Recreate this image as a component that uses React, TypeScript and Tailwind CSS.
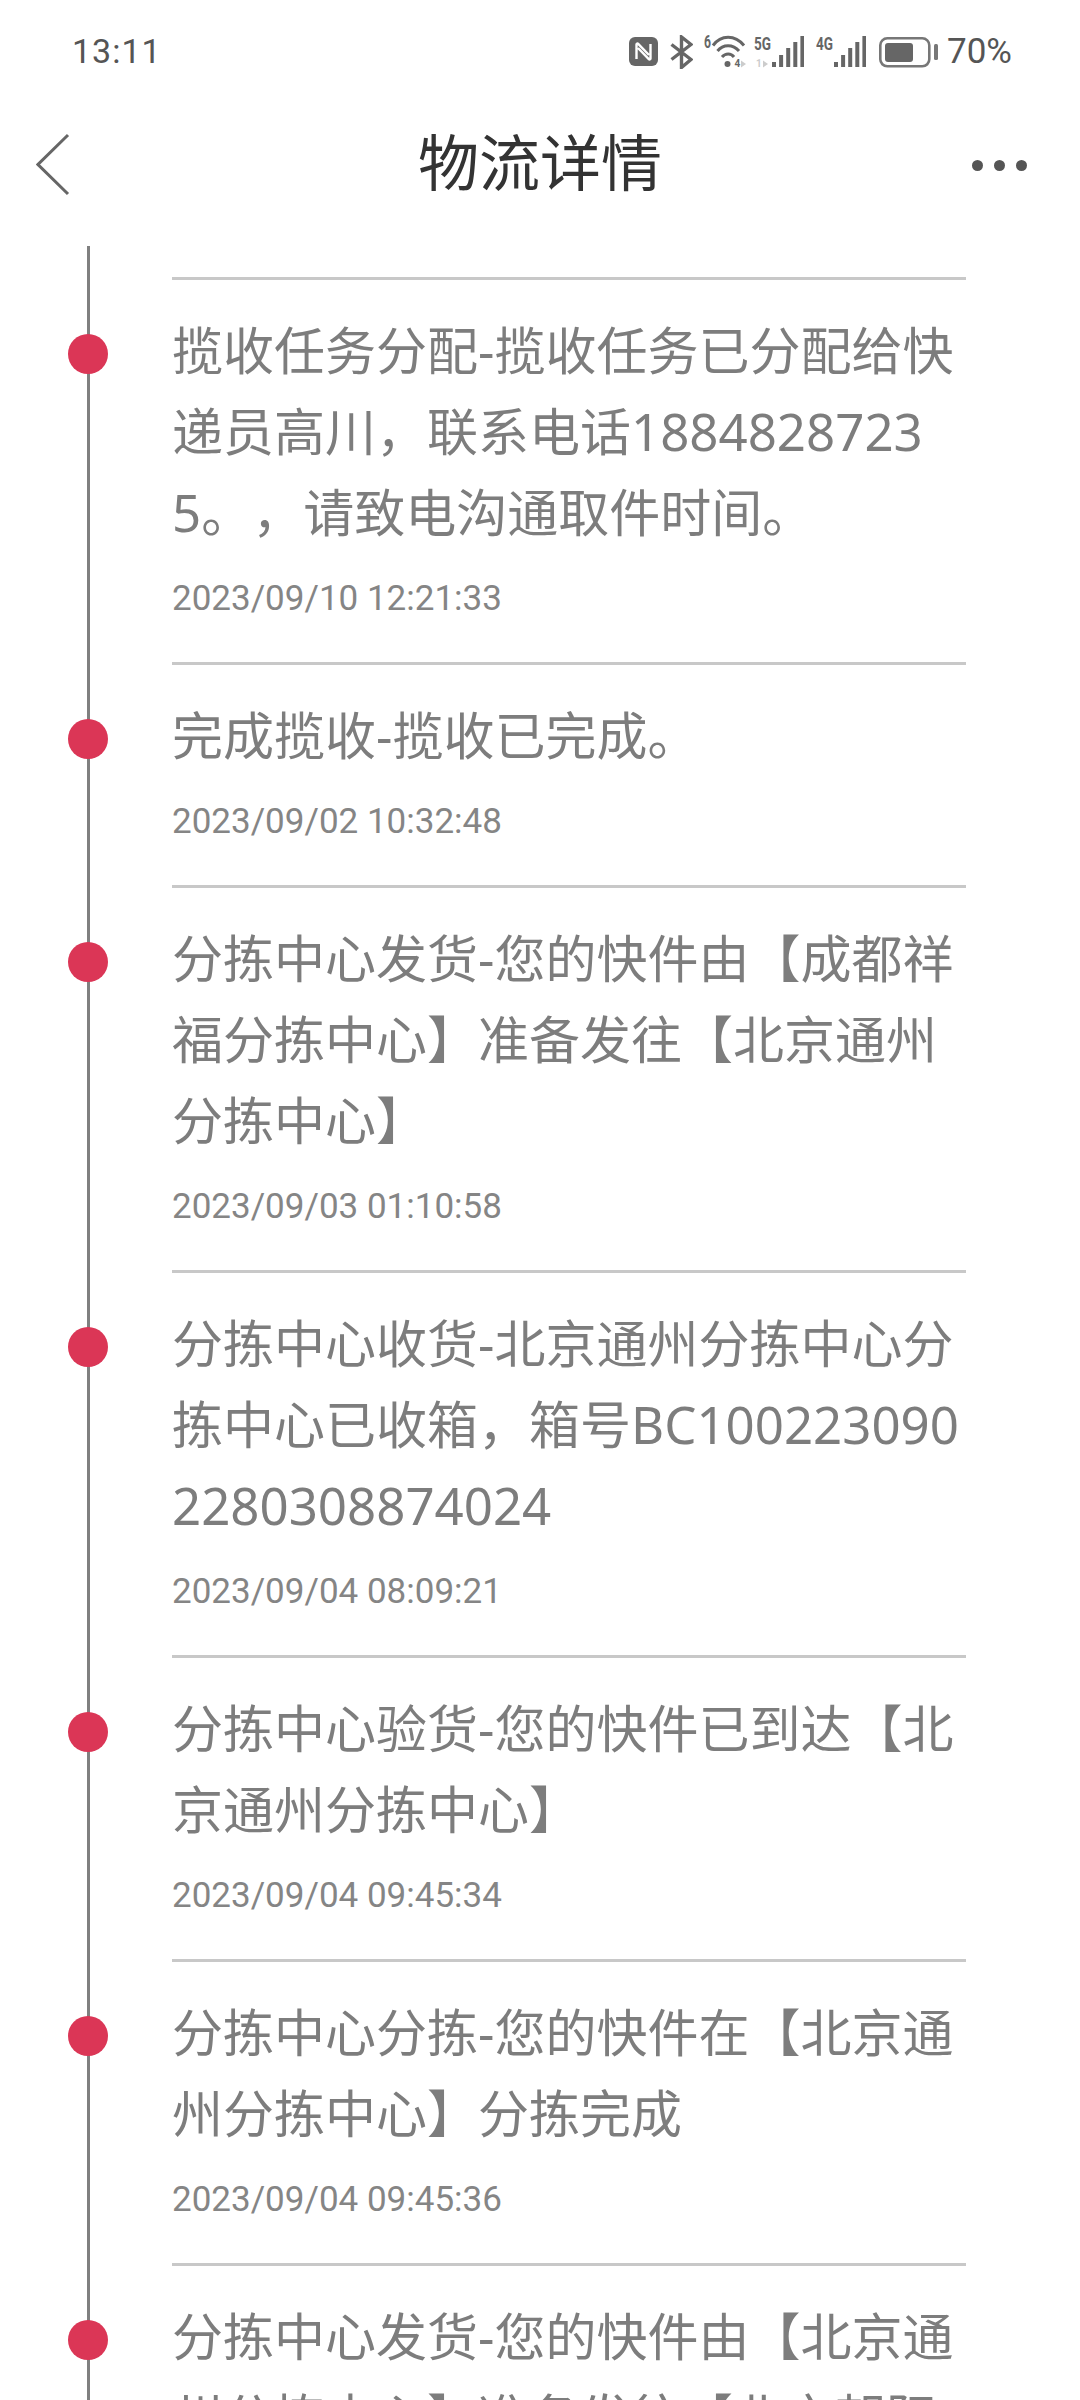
const sans = { fontFamily: '"Noto Sans", "Noto Sans CJK SC", sans-serif' }
const roboto = { fontFamily: "Roboto, sans-serif" }

const items = [
  { text: "揽收任务分配-揽收任务已分配给快递员高川，联系电话18848287235。，请致电沟通取件时间。", time: "2023/09/10 12:21:33" },
  { text: "完成揽收-揽收已完成。", time: "2023/09/02 10:32:48" },
  { text: "分拣中心发货-您的快件由【成都祥福分拣中心】准备发往【北京通州分拣中心】", time: "2023/09/03 01:10:58" },
  { text: "分拣中心收货-北京通州分拣中心分拣中心已收箱，箱号BC1002230902280308874024", time: "2023/09/04 08:09:21" },
  { text: "分拣中心验货-您的快件已到达【北京通州分拣中心】", time: "2023/09/04 09:45:34" },
  { text: "分拣中心分拣-您的快件在【北京通州分拣中心】分拣完成", time: "2023/09/04 09:45:36" },
  { text: "分拣中心发货-您的快件由【北京通州分拣中心】准备发往【北京朝阳", time: "2023/09/04 10:02:11" },
]

function Nfc() {
  return (
    <svg width="29" height="34" viewBox="0 0 29 34" className="shrink-0">
      <rect x="0" y="2" width="29" height="29" rx="6" fill="#666" />
      <path d="M7.500 24V9.500c0-1 1-1.300 1.700-.6L20 20M21.500 9v14.500c0 1-1 1.300-1.700.6L9 13" fill="none" stroke="#fff" strokeWidth="2.400" />
    </svg>
  )
}

function Bluetooth() {
  return (
    <svg width="23" height="34" viewBox="0 0 23 34" className="shrink-0">
      <path d="M1.500 9.500 21 24.500 11.500 32.500V2L21 9.500 1.500 24.500" fill="none" stroke="#666" strokeWidth="3.400" />
    </svg>
  )
}

function Wifi() {
  return (
    <svg width="43" height="44" viewBox="0 -5 43 44" className="shrink-0">
      <text x="0" y="13" fontSize="18" fontWeight="700" fill="#666" textLength="7" lengthAdjust="spacingAndGlyphs" style={roboto}>6</text>
      <g fill="none" stroke="#666" strokeWidth="3">
        <path d="M9 10.500C17 -0.500 31 -0.500 40 10.500" />
        <path d="M13.500 16C19 9 29 9 35 16" />
        <path d="M18 22C21.500 18 27 18 30 22" />
      </g>
      <circle cx="23.500" cy="29" r="3" fill="#666" />
      <text x="30.500" y="32" fontSize="10" fontWeight="700" fill="#666" style={roboto}>4</text>
      <path d="M37 25.500 42 29 37 32.500Z" fill="#ccc" />
    </svg>
  )
}

const barHeights = [5, 12, 19, 25, 31]

function Signal({ label, dim }: { label: string; dim?: boolean }) {
  return (
    <svg width="50" height="44" viewBox="0 -5 50 44" className="shrink-0">
      <text x="0" y="15" fontSize="18" fontWeight="700" fill="#666" textLength="17" lengthAdjust="spacingAndGlyphs" style={roboto}>{label}</text>
      {dim && <text x="2" y="32" fontSize="10" fontWeight="700" fill="#ccc" style={roboto}>1</text>}
      {dim && <path d="M9 25.500 14 29 9 32.500Z" fill="#ccc" />}
      {barHeights.map((h, i) => (
        <rect key={i} x={18 + i * 7.100} y={32 - h} width="4" height={h} fill="#666" />
      ))}
    </svg>
  )
}

function Battery() {
  return (
    <svg width="59" height="34" viewBox="0 0 59 34" className="shrink-0">
      <rect x="1.300" y="3.300" width="49" height="28" rx="7" fill="none" stroke="#777" strokeWidth="2.600" />
      <rect x="6" y="8" width="28" height="19" rx="3" fill="#666" />
      <rect x="55" y="9" width="4" height="16" rx="1.500" fill="#777" />
    </svg>
  )
}

export default function App() {
  return (
    <div className="w-[1080px] h-[2400px] overflow-hidden bg-white" style={sans}>
      <div className="h-[100px] pt-[4px] flex items-center justify-between pl-[72px] pr-[68px]">
        <span className="text-[34px] text-[#555] tracking-[1px] -mt-[2px]" style={roboto}>13:11</span>
        <div className="flex items-center">
          <Nfc />
          <div className="w-[12px]" />
          <Bluetooth />
          <div className="w-[11px]" />
          <Wifi />
          <div className="w-[7px]" />
          <Signal label="5G" dim />
          <div className="w-[12px]" />
          <Signal label="4G" />
          <div className="w-[13px]" />
          <Battery />
          <span className="ml-[9px] text-[35px] leading-[34px] text-[#555]" style={roboto}>70%</span>
        </div>
      </div>

      <div className="h-[130px] mb-[16px] flex items-center justify-between pl-[36px] pr-[53px] relative">
        <svg width="34" height="64" viewBox="0 0 34 64" className="shrink-0">
          <path d="M32 2 2 31.500 32 61" fill="none" stroke="#666" strokeWidth="3" />
        </svg>
        <h1 className="absolute left-0 right-0 -translate-y-[3px] text-center text-[61px] leading-none text-[#333] font-normal">物流详情</h1>
        <div className="flex gap-[11px]">
          <span className="w-[11px] h-[11px] rounded-full bg-[#555]" />
          <span className="w-[11px] h-[11px] rounded-full bg-[#555]" />
          <span className="w-[11px] h-[11px] rounded-full bg-[#555]" />
        </div>
      </div>

      <div className="ml-[87px] border-l-[3px] border-[#808080] pl-[82px] pt-[31px] w-[879px] h-[2154px]">
        {items.map((item, i) => (
          <div key={i} className="relative border-t-[3px] border-[#c8c8c8] pt-[30px] pb-[43px]">
            <span className="absolute left-[-104px] top-[54px] w-[40px] h-[40px] rounded-full bg-[#db3656]" />
            <p className="text-[51px] leading-[81px] text-[#7d7d7d] break-all [text-spacing-trim:space-all]">{item.text}</p>
            <p className="mt-[26px] text-[35px] leading-[40px] text-[#858585]" style={roboto}>{item.time}</p>
          </div>
        ))}
      </div>
    </div>
  )
}
